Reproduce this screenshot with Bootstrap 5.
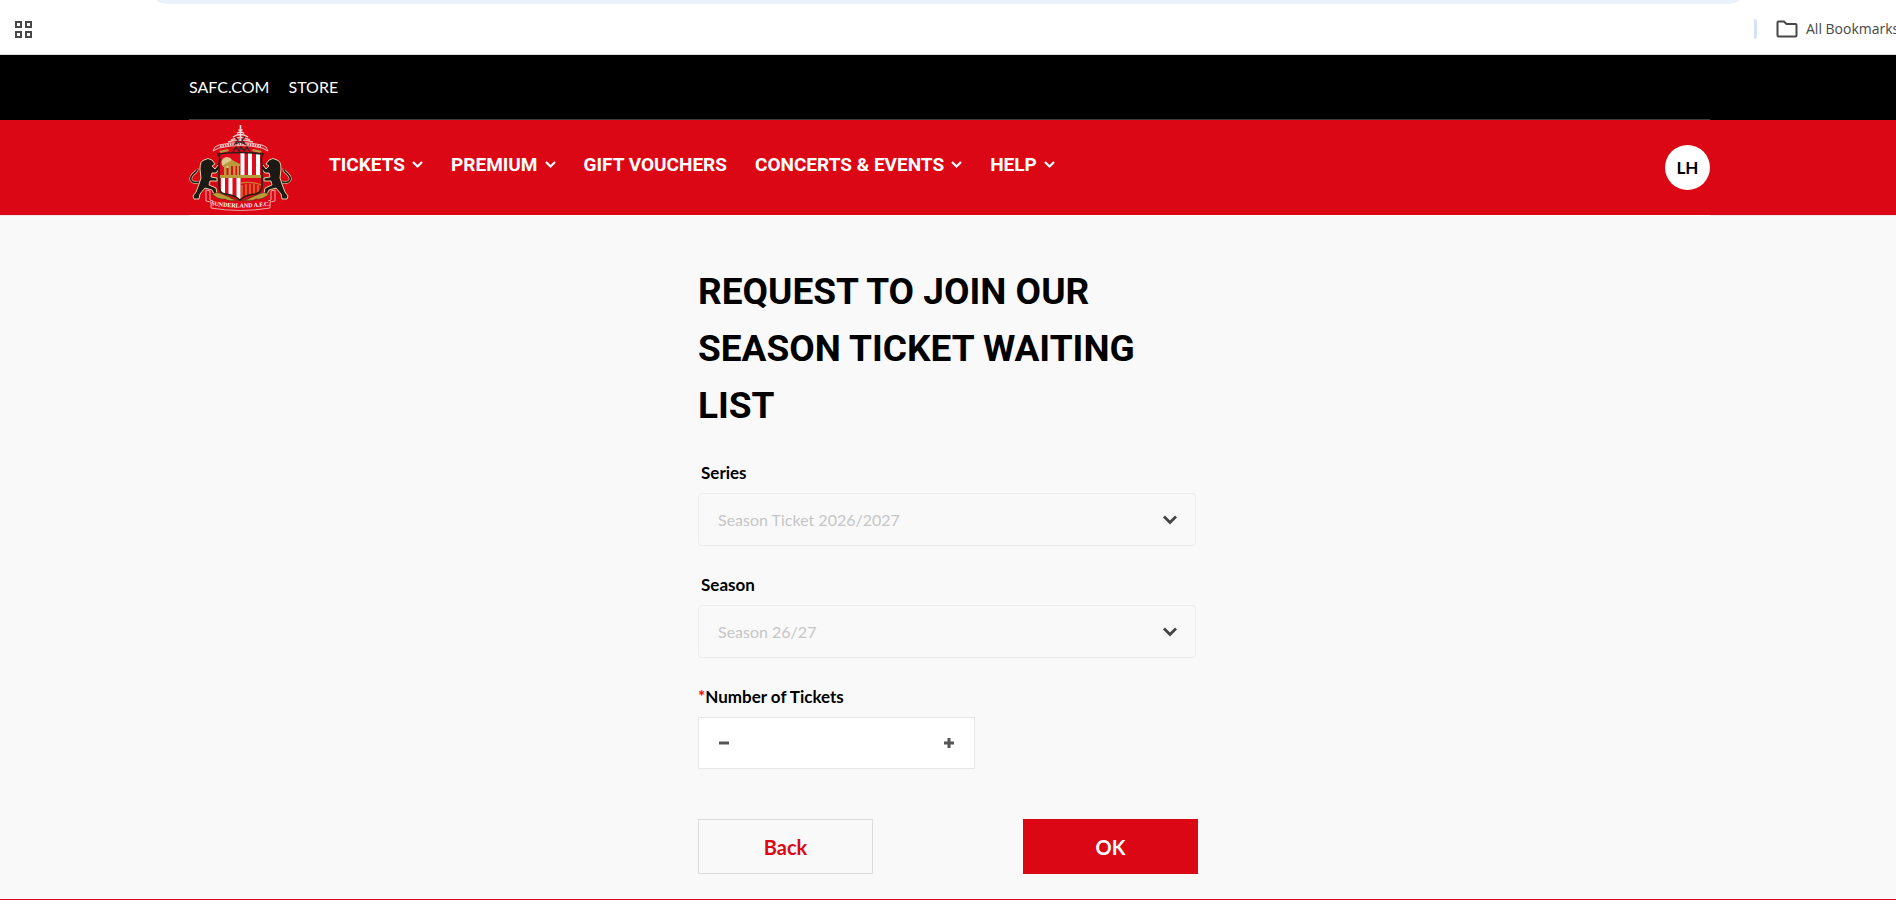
<!DOCTYPE html>
<html lang="en">
<head>
<meta charset="utf-8">
<meta name="viewport" content="width=device-width, initial-scale=1">
<title>Season Ticket Waiting List</title>
<link rel="stylesheet" href="https://cdn.jsdelivr.net/npm/bootstrap@5.3.0/dist/css/bootstrap.min.css">
<style>
  :root { --club-red: #dc0714; }
  body { font-family: Lato, "Open Sans", sans-serif; font-size: 16px; line-height: 24px; color: #000; background: #f9f9f9; }
  .page-pad { padding-left: 189px; padding-right: 186px; }

  .browser-bar { border-bottom: 1px solid #dcdcdc; }
  .address-edge { height: 4px; margin: 0 157px; background: #ecf2fb; border-radius: 0 0 12px 12px / 0 0 4px 4px; }
  .bookmarks { height: 50px; padding: 0 0 0 14px; font-family: "Open Sans", sans-serif; font-size: 14px; color: #474747; }
  .bookmarks-right { width: 142px; }
  .bookmark-rule { width: 3px; height: 20px; background: #d3e3fd; border-radius: 2px; margin-right: 19px; }

  .top-links { background: #000; }
  .top-links nav { height: 65px; gap: 19px; border-bottom: 1px solid #3c3c3c; }
  .top-links a { color: #fff; text-decoration: none; }

  .club-bar { background: var(--club-red); min-height: 95px; }
  .main-menu { gap: 28px; margin-left: 37px; font-family: Roboto, sans-serif; font-size: 19px; font-weight: 700; padding-bottom: 5px; }
  .main-menu .nav-link { color: #fff; padding: 0; display: flex; align-items: center; gap: 7px; }
  .avatar { width: 45px; height: 45px; padding: 0; background: #fff; border-radius: 50%; font-size: 17px; font-weight: 700; }
  .header-rule { background: #eaeaea; }
  .header-rule div { height: 1px; background: #fff; }

  .request-form { width: 500px; max-width: 100%; margin: 47px auto 0; }
  .request-form h1 { font-family: Roboto, sans-serif; font-size: 37px; line-height: 57px; font-weight: 700; margin: 0 0 27px; }
  .form-label { font-size: 17px; font-weight: 700; margin-bottom: 8px; display: block; }
  .field { margin: 0 2px 27px 0; }
  .field .form-label { padding-left: 3px; }
  .field .form-select { height: 53px; padding: 0 44px 0 19px; font-size: 16px; color: #c6c6c6; background-color: #f9f9f9; border: 1px solid #ededed; border-radius: 4px; opacity: 1;
    background-image: url("data:image/svg+xml,%3Csvg xmlns='http://www.w3.org/2000/svg' viewBox='0 0 14 10'%3E%3Cpath d='M1 1.500l6 6 6-6' fill='none' stroke='%23444' stroke-width='2.8'/%3E%3C/svg%3E"); background-size: 14px 10px; background-position: right 18px center; }
  .required { color: #f00; }
  .stepper { width: 277px; height: 52px; background: #fff; border: 1px solid #e6e6e6; margin-bottom: 50px; }
  .stepper button { width: 50px; padding: 0 0 4px; border: 0; border-radius: 0; line-height: 1; }
  .stepper input { min-width: 0; border: 0; box-shadow: none; text-align: center; }
  .btn-action { width: 175px; height: 55px; border-radius: 0; font-size: 20px; font-weight: 700; padding: 0; }
  .btn-back { color: var(--club-red); border: 1px solid #dcdcdc; }
  .btn-ok { color: #fff; background: var(--club-red); border: 0; }
  .site-footer { border-top: 1px solid #d50c18; }
</style>
</head>
<body class="d-flex flex-column min-vh-100 overflow-x-hidden">
<div class="browser-bar bg-white overflow-hidden">
  <div class="address-edge"></div>
  <div class="bookmarks d-flex align-items-center justify-content-between">
    <svg width="19" height="19" viewBox="0 0 19 19" fill="none" stroke="#474747" stroke-width="2" aria-hidden="true"><path d="M2 2h5v5H2zM12 2h5v5h-5zM2 12h5v5H2zM12 12h5v5h-5z"/></svg>
    <div class="bookmarks-right d-flex align-items-center text-nowrap flex-shrink-0">
      <span class="bookmark-rule flex-shrink-0"></span>
      <svg class="flex-shrink-0 me-2" width="22" height="18" viewBox="0 0 22 18" fill="none" stroke="#474747" stroke-width="2" aria-hidden="true"><path d="M2.500 1.500H8l2.500 2.500h9q1 0 1 1v10.500q0 1-1 1h-17q-1 0-1-1v-13q0-1 1-1z"/></svg>
      <span>All Bookmarks</span>
    </div>
  </div>
</div>

<header>
  <div class="top-links page-pad">
    <nav class="d-flex align-items-center" aria-label="Club sites">
      <a href="#">SAFC.COM</a><a href="#">STORE</a>
    </nav>
  </div>
  <div class="club-bar page-pad d-flex align-items-center">
    <a href="#" aria-label="Home" class="d-flex flex-shrink-0">
      <svg width="103" height="87" viewBox="0 0 103 87" aria-hidden="true">
        <defs>
          <clipPath id="shield"><path d="M29 30Q51 27 74 30Q71 34 73 40V62Q73 69 66 70Q56 71 51 76Q46 71 36 70Q30 69 30 62V40Q32 34 29 30Z"/></clipPath>
          <g id="lion">
            <path d="M10 58C2 60 0 55 3.500 51C6 48 9 47 8 45" fill="none" stroke="#e2cfa0" stroke-width="2.800"/>
            <path d="M10 58C2 60 0 55 3.500 51C6 48 9 47 8 45" fill="none" stroke="#1c1a17" stroke-width="1.500"/>
            <path d="M15 36q4-3 8 0l3 4-3 2 3 3 3-4 2 3-4 5-4 0-1 4 6 1v3l-7 0-1 4 7 3 1 6-3 0-2-4-7-2-5 6-1 5-5 0-1-3 3-4 3-8 2-6-1-9q0-8 4-9z" fill="#1c1a17" stroke="#e2cfa0" stroke-width="1"/>
          </g>
        </defs>
        <use href="#lion"/>
        <use href="#lion" transform="matrix(-1 0 0 1 103 0)"/>
        <g fill="none" stroke="#f6dfdc">
          <path d="M51.500 1v16" stroke-width="1.600"/>
          <path d="M49.500 6h4M48 9.500q3.500-3 7 0M44 13q7.500-5 15 0" stroke-width="1.500"/>
          <path d="M42 16q9.500-5 19 0M39 18q12.500-4 25 0" stroke="#f2b7b5" stroke-width="1.500"/>
        </g>
        <path d="M24 27q1-5 6-6q21-5 43 0q5 1 6 6l-6-3q-21-5-43 0z" fill="#ce1621" stroke="#eebbb8" stroke-width="1"/>
        <path d="M31 22.500q20.500-5 41 0" fill="none" stroke="#f6d7d3" stroke-width="2.200" stroke-dasharray="1.500 1"/>
        <path d="M46 13l3 3-3 4 5-2 5 2-3-4 3-3M44 28l3-5 3 4 2-4 3 4 3-4 3 5" fill="none" stroke="#302525" stroke-width="1.300"/>
        <path d="M30 27l9-2 1 2-8 2zM73 27l-9-2-1 2 8 2z" fill="#b89b3f"/>
        <g clip-path="url(#shield)">
          <path fill="#df0a1c" d="M28 28h47v50H28z"/>
          <path fill="#fff" d="M51.500 28h4v24h-4zM59 28h4v24h-4zM67 28h4v24h-4zM32 54h4v24h-4zM39.500 54h4v24h-4zM47.500 54h4v24h-4z"/>
          <circle cx="38" cy="38.500" r="5.500" fill="#dcc88d"/>
          <path fill="#b99b3c" d="M34 41l9-5 8 4v2H34zM35 42h2.500v10H35zM39.500 42H42v10h-2.500zM44 42h2.500v10H44zM48 42h2v10h-2zM29 51h45v3H29z"/>
          <path d="M52 59q10-2 21 2M53 61v14M57 60v14M61 60v13M65 60v13M69 61v11" fill="none" stroke="#c98328" stroke-width="1.400"/>
        </g>
        <path d="M29 30Q51 27 74 30Q71 34 73 40V62Q73 69 66 70Q56 71 51 76Q46 71 36 70Q30 69 30 62V40Q32 34 29 30Z" fill="none" stroke="#252019" stroke-width="1.700"/>
        <path d="M17 66l4 1v9l3 1M86 66l-4 1v9l-3 1M17 66v11l5 1v6q29 5 59 0v-6l5-1v-11" fill="none" stroke="#e9a9a4" stroke-width="1"/>
        <path d="M23 70q5-3 10 0l7 3q4 3 10 3-10 2-14-1-7 1-13-5zM80 70q-5-3-10 0l-7 3q-4 3-10 3 10 2 14-1 7 1 13-5z" fill="#b99b3c" stroke="#3a2a15" stroke-width=".5"/>
        <path id="scroll" d="M22 81q29 5 62 0" fill="none"/>
        <text font-family="Liberation Serif, serif" font-size="6" font-weight="700" fill="#fff"><textPath href="#scroll">SUNDERLAND A.F.C.</textPath></text>
      </svg>
    </a>
    <ul class="main-menu nav flex-nowrap text-nowrap">
      <li><a class="nav-link" href="#">TICKETS <svg width="11" height="8" viewBox="0 0 11 8" fill="none" stroke="#fff" stroke-width="2.200" aria-hidden="true"><path d="M1 1l4.500 4.500L10 1"/></svg></a></li>
      <li><a class="nav-link" href="#">PREMIUM <svg width="11" height="8" viewBox="0 0 11 8" fill="none" stroke="#fff" stroke-width="2.200" aria-hidden="true"><path d="M1 1l4.500 4.500L10 1"/></svg></a></li>
      <li><a class="nav-link" href="#">GIFT VOUCHERS</a></li>
      <li><a class="nav-link" href="#">CONCERTS &amp; EVENTS <svg width="11" height="8" viewBox="0 0 11 8" fill="none" stroke="#fff" stroke-width="2.200" aria-hidden="true"><path d="M1 1l4.500 4.500L10 1"/></svg></a></li>
      <li><a class="nav-link" href="#">HELP <svg width="11" height="8" viewBox="0 0 11 8" fill="none" stroke="#fff" stroke-width="2.200" aria-hidden="true"><path d="M1 1l4.500 4.500L10 1"/></svg></a></li>
    </ul>
    <button type="button" class="avatar border-0 ms-auto flex-shrink-0">LH</button>
  </div>
  <div class="header-rule page-pad"><div></div></div>
</header>

<main class="flex-grow-1">
  <form class="request-form">
    <h1>REQUEST TO JOIN OUR SEASON TICKET WAITING LIST</h1>
    <div class="field">
      <label class="form-label" for="series">Series</label>
      <select class="form-select" id="series" disabled><option>Season Ticket 2026/2027</option></select>
    </div>
    <div class="field">
      <label class="form-label" for="season">Season</label>
      <select class="form-select" id="season" disabled><option>Season 26/27</option></select>
    </div>
    <label class="form-label" for="tickets"><span class="required">*</span>Number of Tickets</label>
    <div class="stepper d-flex">
      <button type="button" class="btn flex-shrink-0" aria-label="Fewer tickets"><svg width="12" height="12" viewBox="0 0 12 12" stroke="#555" stroke-width="3" aria-hidden="true"><path d="M1 6h10"/></svg></button>
      <input class="form-control bg-transparent" id="tickets" type="text" inputmode="numeric">
      <button type="button" class="btn flex-shrink-0" aria-label="More tickets"><svg width="12" height="12" viewBox="0 0 12 12" stroke="#555" stroke-width="3" aria-hidden="true"><path d="M1 6h10M6 1v10"/></svg></button>
    </div>
    <div class="d-flex justify-content-between">
      <button type="button" class="btn btn-action btn-back">Back</button>
      <button type="submit" class="btn btn-action btn-ok">OK</button>
    </div>
  </form>
</main>
<footer class="site-footer"></footer>
<script src="https://cdn.jsdelivr.net/npm/bootstrap@5.3.0/dist/js/bootstrap.bundle.min.js"></script>
</body>
</html>
